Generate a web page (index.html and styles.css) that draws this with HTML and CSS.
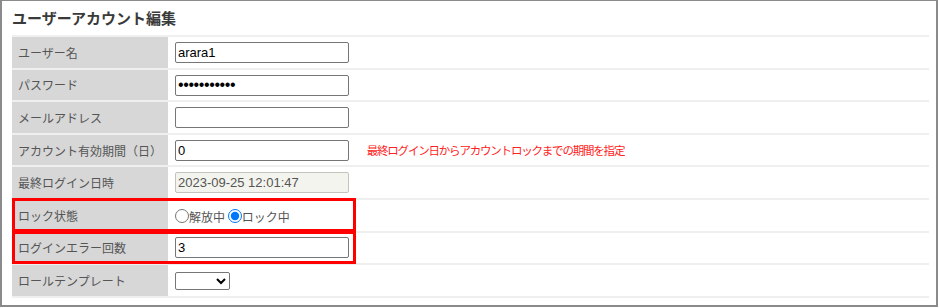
FILE: index.html
```html
<!DOCTYPE html>
<html lang="ja">
<head>
    <meta charset="UTF-8">
    <title>ユーザーアカウント編集</title>
    <link rel="stylesheet" href="styles.css">
</head>
<body>
    <div class="panel">
        <h2 class="panel-title">ユーザーアカウント編集</h2>

        <table class="form-table">
            <tr>
                <th>ユーザー名</th>
                <td><input type="text" class="text-input" value="arara1"></td>
            </tr>
            <tr>
                <th>パスワード</th>
                <td><input type="password" class="text-input pass" value="password123"></td>
            </tr>
            <tr>
                <th>メールアドレス</th>
                <td><input type="text" class="text-input" value=""></td>
            </tr>
            <tr>
                <th>アカウント有効期間（日）</th>
                <td>
                    <input type="text" class="text-input" value="0">
                    <span class="hint">最終ログイン日からアカウントロックまでの期間を指定</span>
                </td>
            </tr>
            <tr>
                <th>最終ログイン日時</th>
                <td><input type="text" class="text-input" value="2023-09-25 12:01:47" disabled></td>
            </tr>
            <tr class="marked">
                <th>ロック状態</th>
                <td>
                    <label class="radio"><input type="radio" name="lock">解放中</label>
                    <label class="radio"><input type="radio" name="lock" checked>ロック中</label>
                </td>
            </tr>
            <tr class="marked">
                <th>ログインエラー回数</th>
                <td><input type="text" class="text-input" value="3"></td>
            </tr>
            <tr>
                <th>ロールテンプレート</th>
                <td>
                    <select class="select-input">
                        <option></option>
                    </select>
                </td>
            </tr>
        </table>
    </div>
</body>
</html>
```

FILE: styles.css
```css
* {
    margin: 0;
    padding: 0;
    box-sizing: border-box;
}

body {
    font-family: "Noto Sans CJK JP", "Noto Sans", sans-serif;
    background: #fff;
    color: #333;
}

.panel {
    width: 938px;
    height: 307px;
    border: 2px solid #8a8a8a;
    border-top-width: 1px;
    padding: 8px 7px 0 10px;
}

.panel-title {
    font-size: 15px;
    font-weight: bold;
    color: #3a3a3a;
    line-height: 18px;
    height: 26px;
}

.form-table {
    width: 100%;
    border-collapse: collapse;
    font-size: 12px;
}

.form-table tr {
    height: 32.6px;
    border-top: 2px solid #efefef;
}

.form-table tr:last-child {
    border-bottom: 2px solid #efefef;
}

.form-table th {
    width: 156px;
    background: #d7d7d7;
    color: #555;
    font-weight: normal;
    text-align: left;
    padding-left: 6px;
    position: relative;
}

.form-table td {
    padding-left: 7px;
    background: #fff;
}

.marked th::after {
    content: "";
    position: absolute;
    left: 0;
    top: -2px;
    bottom: -1px;
    width: 338px;
    border: 3px solid #f00;
    pointer-events: none;
}

.text-input {
    width: 174px;
    height: 21px;
    border: 1px solid #767676;
    border-radius: 2px;
    padding: 0 2px;
    font-family: "Liberation Sans", "Noto Sans CJK JP", sans-serif;
    font-size: 13px;
    color: #000;
    vertical-align: middle;
}

.text-input.pass {
    font-size: 16px;
    letter-spacing: -0.4px;
}

.text-input:disabled {
    background: #f4f4ee;
    border-color: #c4c4bc;
    color: #555;
}

.hint {
    color: #f22;
    font-size: 11.5px;
    letter-spacing: -1.2px;
    margin-left: 15px;
    vertical-align: middle;
}

.radio {
    color: #555;
    display: inline-flex;
    align-items: center;
    vertical-align: middle;
}

.radio input {
    width: 14px;
    height: 14px;
    margin: 0;
}

.select-input {
    width: 55px;
    height: 18px;
    border: 1px solid #767676;
    border-radius: 2px;
    background: #fff;
    vertical-align: middle;
}
```
